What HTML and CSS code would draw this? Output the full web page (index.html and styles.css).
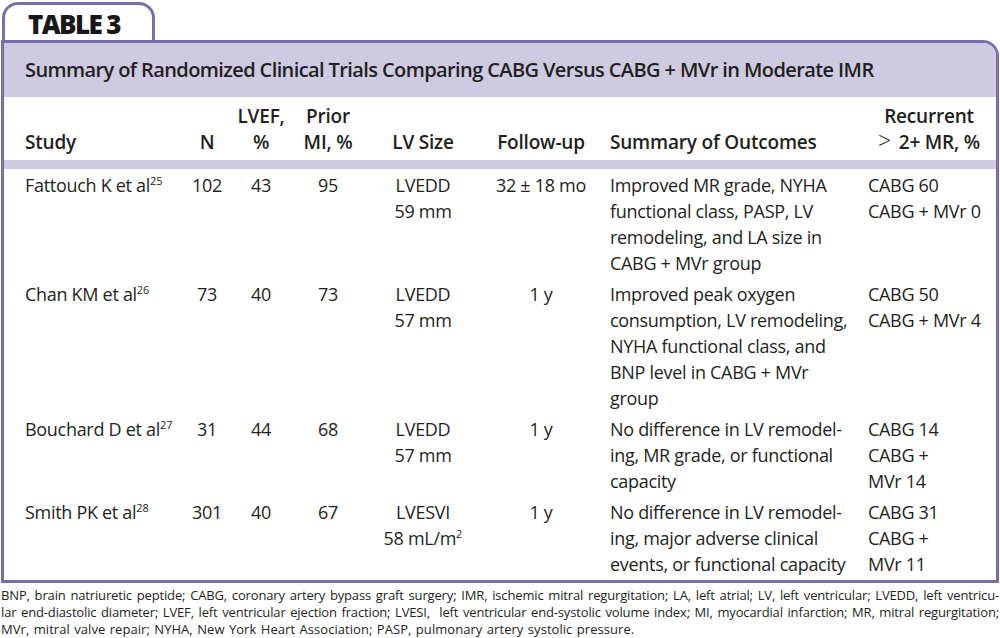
FILE: index.html
```html
<!DOCTYPE html>
<html lang="en">
<head>
<meta charset="utf-8">
<title>Table 3</title>
<link rel="stylesheet" href="styles.css">
</head>
<body>
<div class="page">
  <div class="tab">TABLE 3</div>
  <div class="box">
    <div class="title">Summary of Randomized Clinical Trials Comparing CABG Versus CABG + MVr in Moderate IMR</div>
    <table class="trials">
      <colgroup>
        <col class="c-study"><col class="c-n"><col class="c-lvef"><col class="c-mi"><col class="c-size"><col class="c-fu"><col class="c-out"><col class="c-rec">
      </colgroup>
      <thead>
        <tr>
          <th class="left study">Study</th>
          <th>N</th>
          <th>LVEF,<br>%</th>
          <th>Prior<br>MI, %</th>
          <th>LV Size</th>
          <th>Follow-up</th>
          <th class="left out">Summary of Outcomes</th>
          <th class="rec">Recurrent<br><span class="gt">&gt;</span> 2+ MR, %</th>
        </tr>
      </thead>
      <tbody>
        <tr>
          <td class="left study">Fattouch K et al<sup>25</sup></td>
          <td>102</td>
          <td>43</td>
          <td>95</td>
          <td>LVEDD<br>59 mm</td>
          <td>32 ± 18 mo</td>
          <td class="left out">Improved MR grade, NYHA<br>functional class, PASP, LV<br>remodeling, and LA size in<br>CABG + MVr group</td>
          <td class="left rec">CABG 60<br>CABG + MVr 0</td>
        </tr>
        <tr>
          <td class="left study">Chan KM et al<sup>26</sup></td>
          <td>73</td>
          <td>40</td>
          <td>73</td>
          <td>LVEDD<br>57 mm</td>
          <td>1 y</td>
          <td class="left out">Improved peak oxygen<br>consumption, LV remodeling,<br>NYHA functional class, and<br>BNP level in CABG + MVr<br>group</td>
          <td class="left rec">CABG 50<br>CABG + MVr 4</td>
        </tr>
        <tr>
          <td class="left study">Bouchard D et al<sup>27</sup></td>
          <td>31</td>
          <td>44</td>
          <td>68</td>
          <td>LVEDD<br>57 mm</td>
          <td>1 y</td>
          <td class="left out">No difference in LV remodel-<br>ing, MR grade, or functional<br>capacity</td>
          <td class="left rec">CABG 14<br>CABG +<br>MVr 14</td>
        </tr>
        <tr>
          <td class="left study">Smith PK et al<sup>28</sup></td>
          <td>301</td>
          <td>40</td>
          <td>67</td>
          <td>LVESVI<br>58 mL/m<sup>2</sup></td>
          <td>1 y</td>
          <td class="left out">No difference in LV remodel-<br>ing, major adverse clinical<br>events, or functional capacity</td>
          <td class="left rec">CABG 31<br>CABG +<br>MVr 11</td>
        </tr>
      </tbody>
    </table>
  </div>
  <div class="notes">
    <span class="line just">BNP, brain natriuretic peptide; CABG, coronary artery bypass graft surgery; IMR, ischemic mitral regurgitation; LA, left atrial; LV, left ventricular; LVEDD, left ventricu-</span>
    <span class="line just">lar end-diastolic diameter; LVEF, left ventricular ejection fraction; LVESI,&nbsp; left ventricular end-systolic volume index; MI, myocardial infarction; MR, mitral regurgitation;</span>
    <span class="line last">MVr, mitral valve repair; NYHA, New York Heart Association; PASP, pulmonary artery systolic pressure.</span>
  </div>
</div>
</body>
</html>
```

FILE: styles.css
```css
html, body {
  margin: 0;
  padding: 0;
  background: #ffffff;
}

.page {
  width: 998px;
  padding: 2px 1px 0 1px;
  font-family: "Open Sans", "Noto Sans", sans-serif;
  color: #231f20;
}

.tab {
  width: 147px;
  height: 37px;
  margin-left: 1px;
  border: 3px solid #766fac;
  border-bottom: none;
  border-radius: 16px 16px 0 0;
  box-sizing: content-box;
  font-weight: 800;
  font-size: 26px;
  line-height: 38px;
  text-indent: 23px;
  letter-spacing: -1.6px;
  color: #1a1718;
}

.box {
  border: 3px solid #766fac;
  border-radius: 0 16px 0 0;
  margin-top: -2px;
}

.title {
  background: #cdcae1;
  height: 54px;
  line-height: 54px;
  padding-left: 21px;
  font-size: 20px;
  font-weight: 600;
  letter-spacing: -0.6px;
  border-top-right-radius: 13px;
}

.trials {
  width: 992px;
  border-collapse: collapse;
  table-layout: fixed;
  font-size: 18px;
  line-height: 26px;
}

.c-study { width: 176px; }
.c-n { width: 54px; }
.c-lvef { width: 54px; }
.c-mi { width: 80px; }
.c-size { width: 110px; }
.c-fu { width: 126px; }
.c-out { width: 258px; }
.c-rec { width: 134px; }

.trials th {
  font-size: 19px;
  font-weight: 600;
  vertical-align: bottom;
  text-align: center;
  padding: 6px 0 5px 0;
  border-bottom: 9px solid #cdcae1;
  letter-spacing: -0.2px;
  white-space: nowrap;
}

.trials td {
  vertical-align: top;
  text-align: center;
  padding: 2.5px 0 2.5px 0;
  white-space: nowrap;
  letter-spacing: -0.3px;
}

.trials .left { text-align: left; }
.trials .study { padding-left: 21px; }
.trials .out { padding-left: 6px; }
.trials td.rec { padding-left: 6px; }
.trials th.rec { text-align: center; }

.trials tbody tr:first-child td { padding-top: 3px; }

sup {
  font-size: 11px;
  line-height: 0;
  vertical-align: 7px;
  letter-spacing: 0;
}

.gt {
  font-size: 23px;
  font-weight: 300;
  line-height: 0;
  margin-right: 3px;
}

.notes {
  padding-top: 4px;
  font-size: 13px;
  line-height: 17px;
  letter-spacing: -0.15px;
  color: #231f20;
}

.notes .line {
  display: block;
  white-space: nowrap;
}

.notes .line.last {
  letter-spacing: 0.05px;
  word-spacing: 1px;
}

.notes .line.just {
  white-space: normal;
  text-align: justify;
  text-align-last: justify;
}
```
